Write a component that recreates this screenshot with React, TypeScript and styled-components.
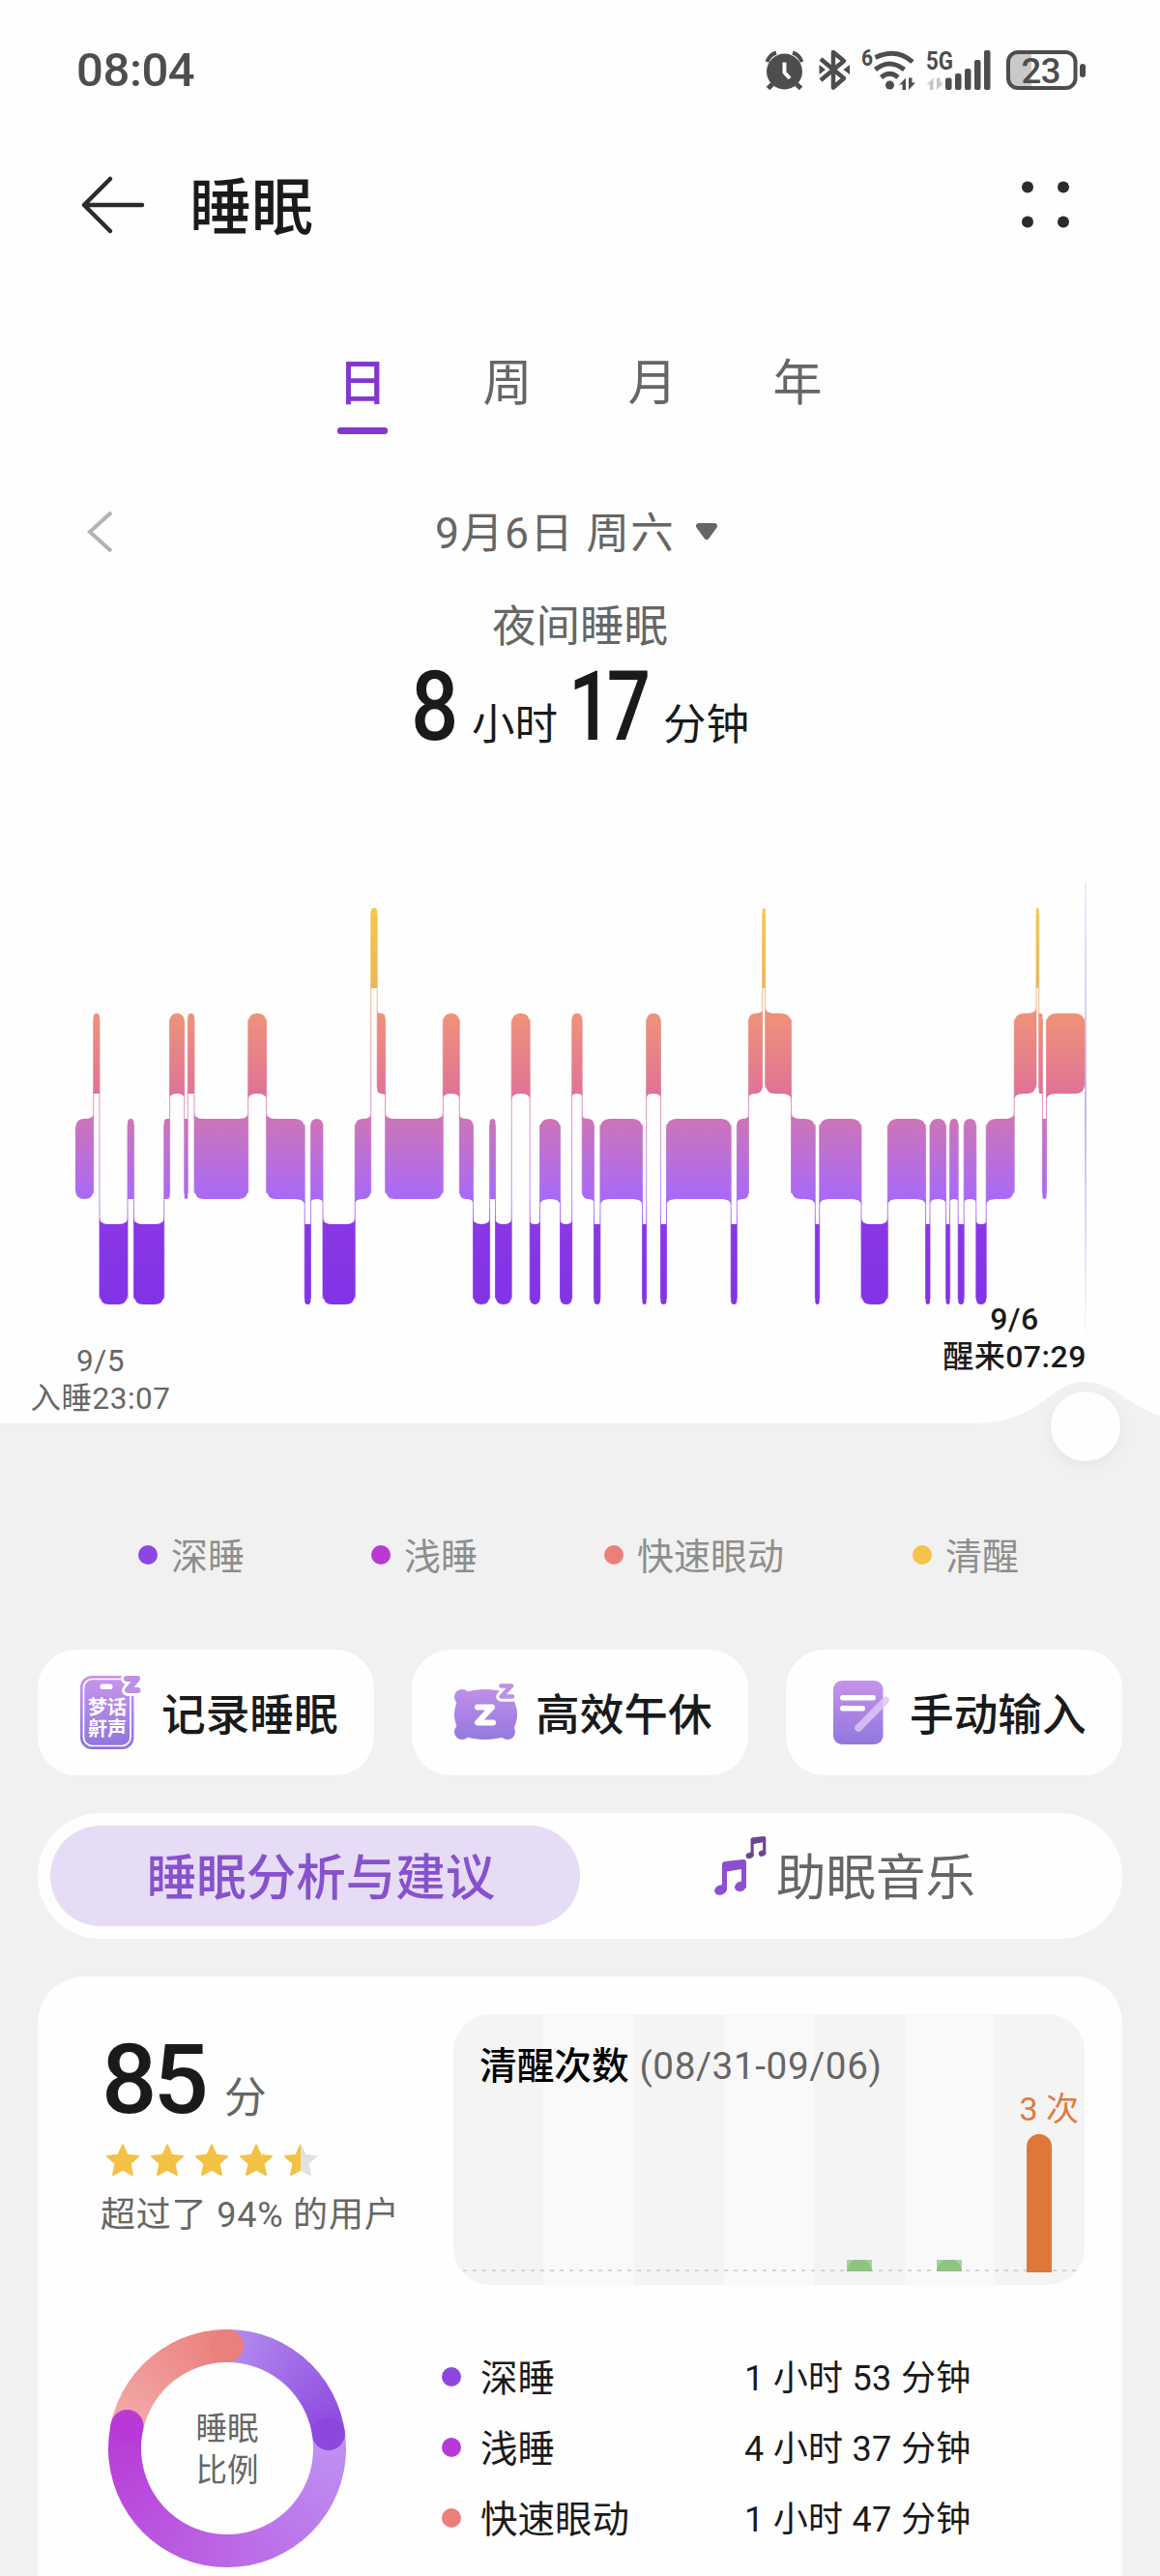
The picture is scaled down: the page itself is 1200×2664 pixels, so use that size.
import { Fragment } from 'react'
import styled, { createGlobalStyle } from 'styled-components'

const GlobalStyle = createGlobalStyle`
  * {
    box-sizing: border-box;
  }
  body {
    margin: 0;
    background: #f1f1f1;
    font-family: 'Noto Sans CJK SC', 'Noto Sans', sans-serif;
    color: #1a1a1a;
  }
  svg {
    display: block;
    flex: none;
    overflow: visible;
  }
  svg text {
    font-family: Roboto, 'Noto Sans CJK SC', sans-serif;
  }
`

const Page = styled.main`
  width: 1200px;
  height: 2664px;
  overflow: hidden;
  background: #f1f1f1;
`
const Summary = styled.section`
  height: 900px;
  background: #fefefe;
`
// keeps the Chinese baseline of the parent, only the digits come from Roboto
const Mixed = styled.span<{ $spacing?: number }>`
  font-family: Roboto, 'Noto Sans CJK SC', sans-serif;
  line-height: 1;
  letter-spacing: ${({ $spacing = 0 }) => $spacing}px;
`

const StatusBar = styled.div`
  display: flex;
  justify-content: space-between;
  align-items: center;
  height: 144px;
  padding: 0 77px 0 79px;
`
const Clock = styled.span`
  padding-top: 2px;
  font-family: Roboto, sans-serif;
  font-size: 49px;
  font-weight: 500;
  line-height: 60px;
  letter-spacing: -0.4px;
  color: #4d4d4d;
`
const StatusIcons = styled.div`
  display: flex;
  gap: 9px;
`

const AppBar = styled.header`
  display: flex;
  align-items: center;
  height: 136px;
  padding: 0 93px 0 83px;
`
const Title = styled.h1`
  flex: 1;
  margin: 0 0 6px 47px;
  font-size: 64px;
  font-weight: 500;
  line-height: 80px;
`

const Tabs = styled.nav`
  display: flex;
  justify-content: center;
  margin-top: 62px;
`
const Tab = styled.div<{ $active?: boolean }>`
  display: flex;
  flex-direction: column;
  align-items: center;
  width: 150px;
  font-size: 51px;
  font-weight: ${({ $active }) => ($active ? 500 : 400)};
  line-height: 100px;
  color: ${({ $active }) => ($active ? '#8436d0' : '#666')};

  &::after {
    content: '';
    width: 52px;
    height: 7px;
    border-radius: 3px;
    background: ${({ $active }) => ($active ? '#8436d0' : 'transparent')};
  }
`

const DateRow = styled.div`
  display: grid;
  grid-template-columns: 1fr auto 1fr;
  align-items: center;
  height: 100px;
  margin-top: 51px;
  padding: 0 97px 0 90px;
`
const DateLabel = styled.div`
  display: flex;
  align-items: center;
  gap: 21px;
  font-size: 44.5px;
  line-height: 60px;
  color: #666;
`
const DateText = styled.span`
  padding-bottom: 5px;
`
const Caption = styled.div`
  margin-top: 14px;
  font-size: 45.5px;
  line-height: 60px;
  text-align: center;
  color: #666;
`
const Duration = styled.div`
  display: flex;
  justify-content: center;
  align-items: baseline;
  margin-top: 7px;
  font-size: 44.5px;
  line-height: 100px;
`
const BigNumber = styled.b<{ $width: number; $scale: number }>`
  width: ${({ $width }) => $width}px;
  font-family: Roboto, sans-serif;
  font-size: 101px;
  font-weight: 500;
  letter-spacing: -7px;
  transform: scaleX(${({ $scale }) => $scale});
  transform-origin: left;
`
const Unit = styled.span`
  margin-right: 11px;

  &:last-child {
    margin-right: 0;
  }
`

const ChartArea = styled.section`
  position: relative;
  height: 660px;
  background: #fefefe;
`
const TimeLabel = styled.div<{ $end?: boolean }>`
  position: absolute;
  top: ${({ $end }) => ($end ? 442 : 485)}px;
  left: ${({ $end }) => ($end ? 973 : 30)}px;
  width: ${({ $end }) => ($end ? 153 : 148)}px;
  font-size: ${({ $end }) => ($end ? 32 : 31.5)}px;
  font-weight: ${({ $end }) => ($end ? 500 : 400)};
  line-height: 39px;
  text-align: center;
  white-space: nowrap;
  color: ${({ $end }) => ($end ? '#1a1a1a' : '#666')};
`

const Legend = styled.div`
  display: flex;
  gap: 131px;
  height: 146px;
  padding: 18px 0 0 143px;
`
const LegendItem = styled.div`
  display: flex;
  align-items: center;
  gap: 14px;
  height: 60px;
  font-size: 38px;
  line-height: 56px;
  color: #8e8e8e;

  &:last-child {
    margin-left: 2px;
  }
`
const Dot = styled.i<{ $color: string }>`
  flex: none;
  width: 20px;
  height: 20px;
  border-radius: 50%;
  background: ${({ $color }) => $color};
`
const Nudge = styled.span`
  padding-bottom: 3px;
`

const Actions = styled.div`
  display: grid;
  grid-template-columns: repeat(3, 1fr);
  gap: 39px;
  padding: 0 39px;
`
const Action = styled.div`
  display: flex;
  align-items: center;
  gap: 20px;
  height: 130px;
  padding-left: 44px;
  border-radius: 40px;
  background: #fefefe;
  font-size: 45.7px;
  font-weight: 500;
  line-height: 60px;
  white-space: nowrap;
`

const Switcher = styled.div`
  display: grid;
  grid-template-columns: 1fr 1fr;
  height: 130px;
  margin: 39px 39px 0;
  padding: 13px;
  border-radius: 65px;
  background: #fefefe;
`
const SwitchItem = styled.div<{ $active?: boolean }>`
  display: flex;
  justify-content: center;
  align-items: center;
  gap: 10px;
  padding: ${({ $active }) => ($active ? '0 0 5px 12px' : '0 0 5px 0')};
  border-radius: 52px;
  background: ${({ $active }) => ($active ? '#e6dcf5' : 'transparent')};
  font-size: 51.5px;
  font-weight: ${({ $active }) => ($active ? 500 : 400)};
  line-height: 70px;
  color: ${({ $active }) => ($active ? '#8652cc' : '#666')};
`

const Card = styled.section`
  height: 620px;
  margin: 39px 39px 0;
  padding: 39px 39px 0 66px;
  border-radius: 48px 48px 0 0;
  background: #fefefe;
`
const CardRow = styled.div`
  display: flex;
  justify-content: space-between;
`
const Score = styled.div`
  padding-top: 9px;
`
const ScoreValue = styled.div`
  display: flex;
  align-items: baseline;
  gap: 20px;
  height: 100px;
  padding-top: 9px;
  font-size: 44px;
  line-height: 100px;
  color: #666;

  b {
    font-family: Roboto, sans-serif;
    font-size: 101px;
    font-weight: 500;
    letter-spacing: -4px;
    color: #1a1a1a;
  }
`
const Stars = styled.div`
  display: flex;
  gap: 12px;
  margin: 25px 0 0 5px;
`
const Rank = styled.div`
  margin: 14px 0 0 -1px;
  font-size: 36px;
  line-height: 44px;
  color: #666;
`

const WakePanel = styled.div`
  position: relative;
  width: 653px;
  height: 280px;
  border-radius: 38px;
  overflow: hidden;
  background: repeating-linear-gradient(90deg, #f4f4f4 0 93.3px, #f9f9f9 93.3px 186.6px);
`
const WakeTitle = styled.div`
  padding: 25px 0 0 27px;
  font-size: 38.7px;
  font-weight: 500;
  line-height: 50px;
  color: #000;
`
const WakeRange = styled(Mixed)`
  margin-left: 2px;
  font-weight: 400;
  color: #666;
`
const WakeBars = styled.div`
  position: absolute;
  inset: 72px 0 13px;
  display: grid;
  grid-template-columns: repeat(7, 1fr);
`
const WakeDay = styled.div`
  display: flex;
  flex-direction: column;
  justify-content: flex-end;
  align-items: center;
`
const WakeCount = styled.div`
  margin-right: -20px;
  font-size: 34px;
  line-height: 40px;
  white-space: nowrap;
  color: #de7a3c;
`
const WakeBar = styled.i<{ $many?: boolean }>`
  width: 26px;
  height: ${({ $many }) => ($many ? 143 : 12)}px;
  margin: ${({ $many }) => ($many ? '8px 0 0' : '0 0 1px')};
  border-radius: ${({ $many }) => ($many ? '13px 13px 0 0' : '0')};
  background: ${({ $many }) =>
    $many ? '#df773a' : 'radial-gradient(circle 13px at 50% 100%, #8fc382 12.5px, #a8d19f 13px)'};
`
const Baseline = styled.div`
  position: absolute;
  right: 0;
  bottom: 14px;
  left: 0;
  height: 2px;
  background: repeating-linear-gradient(90deg, #d6d6d6 0 4px, transparent 4px 10px);
`

const Breakdown = styled.div`
  display: flex;
  margin-top: 46px;
  padding-left: 7px;
`
const Ring = styled.div`
  position: relative;
  display: flex;
  justify-content: center;
  align-items: center;
  width: 246px;
  height: 246px;
  border-radius: 50%;
  background:
    radial-gradient(circle, #fefefe 88.5px, transparent 89.5px),
    conic-gradient(
      #b48dee 0deg,
      #8d47df 81.9deg,
      #be93f3 81.9deg,
      #b839d6 282.5deg,
      #f3aaa9 282.5deg,
      #ea7f7c 360deg
    );
`
const RingCaps = styled.svg`
  position: absolute;
  inset: 0;
`
const RingLabel = styled.div`
  padding-bottom: 4px;
  font-size: 32.5px;
  line-height: 43px;
  text-align: center;
  color: #666;
`
const Stages = styled.div`
  margin: 12px 0 0 99px;
`
const Stage = styled.div`
  display: grid;
  grid-template-columns: 40px 273px auto;
  align-items: center;
  height: 73px;
  font-size: 38.5px;
  line-height: 50px;
  white-space: nowrap;
`
const StageTime = styled.span`
  padding-bottom: 3px;
  font-size: 36px;
`

const levelTop = [939, 1048, 1157, 1266]
const levelHeight = 83

// [level, start x]; levels: 0 awake, 1 REM, 2 light, 3 deep
const segments: [number, number][] = [
  [2, 78], [1, 96.7], [3, 103], [2, 132], [3, 138.5], [2, 169.7], [1, 175.6], [2, 190.7],
  [1, 194.3], [2, 201], [1, 256.7], [2, 275.6], [3, 315.2], [2, 321.4], [3, 334], [2, 367.2],
  [0, 383.7], [1, 390.2], [2, 398.6], [1, 458.3], [2, 475.3], [3, 489.5], [2, 506.6],
  [3, 512.5], [1, 529.2], [3, 548.2], [2, 558.5], [3, 579.5], [1, 591.7], [2, 602.2],
  [3, 614.5], [2, 620.9], [3, 664.5], [1, 668.7], [3, 683.4], [2, 689.5], [3, 756.2],
  [2, 762.3], [1, 774.4], [0, 788.7], [1, 791.7], [2, 818.5], [3, 843.3], [2, 847.7],
  [3, 891], [2, 918.3], [3, 957.6], [2, 962], [3, 978.6], [2, 982.6], [3, 991.2], [2, 997.2],
  [3, 1009.8], [2, 1020.2], [1, 1049.2], [0, 1072], [1, 1074.7], [2, 1078.4], [1, 1082.5],
]
const chartEnd = 1122.3

function segmentPath(i: number) {
  const [level, x0] = segments[i]
  const x1 = segments[i + 1]?.[1] ?? chartEnd
  const prev = segments[i - 1]?.[0]
  const next = segments[i + 1]?.[0]
  const top = levelTop[level]
  const bottom = top + levelHeight
  const w = x1 - x0
  const r = Math.min(10, w / 2)
  const flare = w > 8 ? Math.min(6, r * 0.6) : 0

  const up = (n?: number) => n !== undefined && n < level
  const down = (n?: number) => n !== undefined && n > level
  const tl = up(prev) ? -flare : r
  const tr = up(next) ? -flare : r
  const bl = down(prev) ? -flare : r
  const br = down(next) ? -flare : r

  return [
    `M${x0} ${top + tl}`,
    `Q${x0 + 0.5} ${top} ${x0 + r} ${top}`,
    `L${x1 - r} ${top}`,
    `Q${x1 - 0.5} ${top} ${x1} ${top + tr}`,
    `L${x1} ${bottom - br}`,
    `Q${x1 - 0.5} ${bottom} ${x1 - r} ${bottom}`,
    `L${x0 + r} ${bottom}`,
    `Q${x0 + 0.5} ${bottom} ${x0} ${bottom - bl}`,
    'Z',
  ].join(' ')
}

function SleepChart() {
  return (
    <svg width='1200' height='660' viewBox='0 900 1200 660'>
      <defs>
        <linearGradient id='stages' gradientUnits='userSpaceOnUse' x1='0' y1='939' x2='0' y2='1349'>
          <stop offset='0' stopColor='#f5c748' />
          <stop offset='.2' stopColor='#edb559' />
          <stop offset='.266' stopColor='#ef927a' />
          <stop offset='.468' stopColor='#df7395' />
          <stop offset='.532' stopColor='#cd75b8' />
          <stop offset='.734' stopColor='#a869f8' />
          <stop offset='.797' stopColor='#8a37e6' />
          <stop offset='1' stopColor='#8033e6' />
        </linearGradient>
        <linearGradient id='cursor' x1='0' y1='0' x2='0' y2='1'>
          <stop offset='0' stopColor='#f0ecfb' />
          <stop offset='.5' stopColor='#c9b3ea' />
          <stop offset='1' stopColor='#fefefe' />
        </linearGradient>
        <filter id='knobShadow' x='-50%' y='-50%' width='200%' height='200%'>
          <feDropShadow dx='0' dy='4' stdDeviation='7' floodColor='#000' floodOpacity='.05' />
        </filter>
      </defs>
      <rect x='1122' y='912' width='2' height='480' fill='url(#cursor)' />
      {segments.map(([level, x], i) => {
        const prev = segments[i - 1]?.[0]
        const y = prev === undefined ? 0 : levelTop[Math.min(prev, level)] + 6
        const end = prev === undefined ? 0 : levelTop[Math.max(prev, level)] + levelHeight - 6
        return (
          <Fragment key={x}>
            <path d={segmentPath(i)} fill='url(#stages)' />
            {prev !== undefined && (
              <rect x={x - 0.5} y={y} width='1' height={end - y} fill='url(#stages)' opacity='.75' />
            )}
          </Fragment>
        )
      })}
      <path
        d='M0 1472H1005C1082 1472 1082 1429 1123 1429C1151 1429 1168 1454 1200 1464.5V1560H0Z'
        fill='#f1f1f1'
      />
      <circle cx='1123' cy='1475' r='36' fill='#fefefe' filter='url(#knobShadow)' />
    </svg>
  )
}

function AlarmIcon() {
  return (
    <svg width='47' height='44' viewBox='0 0 47 44' fill='none' stroke='#4d4d4d'>
      <circle cx='20.5' cy='24' r='18.5' fill='#4d4d4d' stroke='none' />
      <path d='M2.5 14Q5 6.500 12 4.500M38.500 14Q36 6.500 29 4.500' strokeWidth='4' />
      <path d='M8 37l-4.500 4.500M33 37l4.500 4.500' strokeWidth='5' />
      <path d='M20.500 14.500V25l5.500 6' stroke='#fefefe' strokeWidth='4' />
    </svg>
  )
}

function BluetoothIcon() {
  return (
    <svg width='35' height='44' viewBox='0 0 35 44' fill='none' stroke='#4d4d4d' strokeWidth='4.500'>
      <path d='M2 11l24 20-11 9.500V4l11 9L2 33' strokeLinejoin='round' />
      <path d='M.500 17l6.500 5-6.500 5zM32 17l-6.500 5 6.500 5z' fill='#4d4d4d' stroke='none' />
    </svg>
  )
}

function WifiIcon() {
  return (
    <svg width='57' height='44' viewBox='0 0 57 44' fill='none' stroke='#4d4d4d' strokeWidth='5'>
      <text x='0' y='18' fontSize='23' fontWeight='700' fill='#4d4d4d' stroke='none' textLength='12' lengthAdjust='spacingAndGlyphs'>
        6
      </text>
      <path d='M14.500 9.500Q36 -1 53 14M14.500 22Q29 10 44.500 22M20.500 30Q29.500 22.500 38 30' />
      <circle cx='29.500' cy='38' r='4.500' fill='#4d4d4d' stroke='none' />
      <path d='M39 38l7-7.500V43h-3.500v-6zM56 35.500L49 43V30.500h3.500v5z' fill='#4d4d4d' stroke='none' />
    </svg>
  )
}

const signalBars = [30.5, 26, 21, 12, 2]

function SignalIcon() {
  return (
    <svg width='75' height='44' viewBox='0 0 75 44' fill='#4d4d4d'>
      <text x='1' y='21.500' fontSize='26' fontWeight='700' textLength='28' lengthAdjust='spacingAndGlyphs'>
        5G
      </text>
      <path d='M1.500 38l7-7.500V43H5v-6zM19 35.500L12 43V30.500h3.500v5z' fill='#c6c6c6' />
      {signalBars.map((y, i) => (
        <rect key={y} x={21 + i * 10} y={y} width='6.500' height={43 - y} rx='2' />
      ))}
    </svg>
  )
}

function BatteryIcon() {
  return (
    <svg width='82' height='44' viewBox='0 0 82 44'>
      <path d='M12 4h14v37H12Q3 41 3 32V13Q3 4 12 4z' fill='#c9c9c9' />
      <rect x='2' y='4' width='69.500' height='37' rx='10' fill='none' stroke='#4d4d4d' strokeWidth='4' />
      <rect x='76' y='16' width='6' height='14' rx='3' fill='#4d4d4d' />
      <text x='15.500' y='35.500' fontSize='36.500' fontWeight='500' fill='#4d4d4d' textLength='41'>
        23
      </text>
    </svg>
  )
}

function IconGradient({ id }: { id: string }) {
  return (
    <linearGradient id={id} gradientUnits='userSpaceOnUse' x1='0' y1='4' x2='0' y2='76'>
      <stop offset='0' stopColor='#c795ec' />
      <stop offset='1' stopColor='#8f75dc' />
    </linearGradient>
  )
}

function RecordIcon() {
  return (
    <svg width='64' height='80' viewBox='0 0 64 80'>
      <defs>
        <IconGradient id='record' />
      </defs>
      <rect x='0' y='2' width='55.500' height='76' rx='12' fill='url(#record)' />
      <rect x='3.500' y='5.500' width='48.500' height='69' rx='9' fill='none' stroke='#fff' strokeWidth='1.700' />
      <rect x='20.500' y='10.500' width='13' height='5.500' rx='2.500' fill='#fff' />
      <text x='8' y='42' fontSize='20' fontWeight='700' fill='#fff' textLength='40'>梦话</text>
      <text x='8' y='64' fontSize='20' fontWeight='700' fill='#fff' textLength='40'>鼾声</text>
      <path d='M48 5h11L49 17h10.500' fill='none' stroke='#fefefe' strokeWidth='12' strokeLinejoin='round' strokeLinecap='round' />
      <path d='M48 5h11L49 17h10.500' fill='none' stroke='#bd90e9' strokeWidth='6' strokeLinejoin='round' strokeLinecap='round' />
    </svg>
  )
}

function NapIcon() {
  return (
    <svg width='64' height='80' viewBox='0 0 64 80'>
      <defs>
        <IconGradient id='nap' />
      </defs>
      <g fill='url(#nap)'>
        <path d='M8 20Q32 12 57 20Q73 42 57 64Q32 72 8 64Q-8 42 8 20Z' />
        <circle cx='8' cy='24' r='8' />
        <circle cx='8' cy='60' r='8' />
        <circle cx='55' cy='60' r='8' />
      </g>
      <path d='M24 34.500h15L24 50.500h16' fill='none' stroke='#fff' strokeWidth='6' strokeLinejoin='round' strokeLinecap='round' />
      <path d='M48.500 12.500h10.500L48.500 23.500h11.500' fill='none' stroke='#fefefe' strokeWidth='10.500' strokeLinejoin='round' strokeLinecap='round' />
      <path d='M48.500 12.500h10.500L48.500 23.500h11.500' fill='none' stroke='#bd90e9' strokeWidth='4.500' strokeLinejoin='round' strokeLinecap='round' />
    </svg>
  )
}

function NoteIcon() {
  return (
    <svg width='64' height='80' viewBox='0 0 64 80'>
      <defs>
        <IconGradient id='note' />
      </defs>
      <rect x='5' y='7' width='51.500' height='66' rx='9' fill='url(#note)' />
      <rect x='12' y='22' width='37' height='5.500' rx='2.700' fill='#fff' />
      <rect x='12' y='33' width='26' height='5.500' rx='2.700' fill='#fff' />
      <path d='M31 56L59 27.500' stroke='#dcc6f8' strokeWidth='7.500' strokeLinecap='round' opacity='.85' />
    </svg>
  )
}

function MusicNote({ color }: { color: string }) {
  return (
    <g fill={color}>
      <path d='M8 5Q8 2.500 11 2L29 0Q33 -.500 33 3V29H28V10L13 12.500V32H8Z' />
      <ellipse cx='6.500' cy='31.500' rx='6.500' ry='5' transform='rotate(-20 6.500 31.500)' />
      <ellipse cx='27' cy='28' rx='6' ry='5' transform='rotate(-20 27 28)' />
    </g>
  )
}

function MusicIcon() {
  return (
    <svg width='54' height='64' viewBox='0 0 54 64'>
      <g transform='translate(0 17)'>
        <MusicNote color='#8b4fd0' />
      </g>
      <g transform='translate(32.500 -7) scale(.63)'>
        <MusicNote color='#6b4793' />
      </g>
    </svg>
  )
}

const starPath = 'M17 1.500L21.600 11.800L33 13L24.500 20.500L27 32L17 26.500L7 32L9.500 20.500L1 13L12.400 11.800Z'

function Star({ half }: { half?: boolean }) {
  return (
    <svg width='34' height='34' viewBox='0 0 34 34' strokeLinejoin='round' strokeWidth='2'>
      <defs>
        <linearGradient id='halfStar'>
          <stop offset='.5' stopColor='#f3c144' />
          <stop offset='.5' stopColor='#e1e1e1' />
        </linearGradient>
      </defs>
      <path d={starPath} fill={half ? 'url(#halfStar)' : '#f3c144'} stroke={half ? 'url(#halfStar)' : '#f3c144'} />
    </svg>
  )
}

const legend = [
  { name: '深睡', color: '#8d47de' },
  { name: '浅睡', color: '#b839d6' },
  { name: '快速眼动', color: '#ec7f7c' },
  { name: '清醒', color: '#f4c34a' },
]
const stageTimes = ['1 小时 53 分钟', '4 小时 37 分钟', '1 小时 47 分钟']
const wakeCounts = [0, 0, 0, 0, 1, 1, 3]

export default function App() {
  return (
    <Page>
      <GlobalStyle />
      <Summary>
        <StatusBar>
          <Clock>08:04</Clock>
          <StatusIcons>
            <AlarmIcon />
            <BluetoothIcon />
            <WifiIcon />
            <SignalIcon />
            <BatteryIcon />
          </StatusIcons>
        </StatusBar>

        <AppBar>
          <svg width='66' height='60' viewBox='0 0 66 60' fill='none' stroke='#2b2b2b' strokeWidth='4.500' strokeLinecap='round' strokeLinejoin='round'>
            <path d='M64 30H4M31 3L4 30l27 27' />
          </svg>
          <Title>睡眠</Title>
          <svg width='50' height='50' viewBox='0 0 50 50' fill='#2b2b2b'>
            <circle cx='6' cy='6.500' r='6' />
            <circle cx='43' cy='6.500' r='6' />
            <circle cx='6' cy='42.500' r='6' />
            <circle cx='43' cy='42.500' r='6' />
          </svg>
        </AppBar>

        <Tabs>
          <Tab $active>日</Tab>
          <Tab>周</Tab>
          <Tab>月</Tab>
          <Tab>年</Tab>
        </Tabs>

        <DateRow>
          <svg width='28' height='44' viewBox='0 0 28 44' fill='none' stroke='#b3b3b3' strokeWidth='4'>
            <path d='M25 2L3 22l22 20' />
          </svg>
          <DateLabel>
            <DateText>
              <Mixed $spacing={1.3}>9月6日 周六</Mixed>
            </DateText>
            <svg width='24' height='18' viewBox='0 0 24 18'>
              <path d='M4 3h16l-8 11z' fill='#666' stroke='#666' strokeWidth='6' strokeLinejoin='round' />
            </svg>
          </DateLabel>
        </DateRow>
        <Caption>夜间睡眠</Caption>
        <Duration>
          <BigNumber $width={63} $scale={0.86}>8</BigNumber>
          <Unit>小时</Unit>
          <BigNumber $width={98} $scale={0.79}>17</BigNumber>
          <Unit>分钟</Unit>
        </Duration>
      </Summary>

      <ChartArea>
        <SleepChart />
        <TimeLabel>
          <Mixed $spacing={0.5}>9/5</Mixed>
          <br />
          <Mixed $spacing={0.5}>入睡23:07</Mixed>
        </TimeLabel>
        <TimeLabel $end>
          <Mixed $spacing={0.5}>9/6</Mixed>
          <br />
          <Mixed $spacing={0.5}>醒来07:29</Mixed>
        </TimeLabel>
      </ChartArea>

      <Legend>
        {legend.map(({ name, color }) => (
          <LegendItem key={name}>
            <Dot $color={color} />
            <Nudge>{name}</Nudge>
          </LegendItem>
        ))}
      </Legend>

      <Actions>
        <Action>
          <RecordIcon />
          <Nudge>记录睡眠</Nudge>
        </Action>
        <Action>
          <NapIcon />
          <Nudge>高效午休</Nudge>
        </Action>
        <Action>
          <NoteIcon />
          <Nudge>手动输入</Nudge>
        </Action>
      </Actions>

      <Switcher>
        <SwitchItem $active>睡眠分析与建议</SwitchItem>
        <SwitchItem>
          <MusicIcon />
          助眠音乐
        </SwitchItem>
      </Switcher>

      <Card>
        <CardRow>
          <Score>
            <ScoreValue>
              <b>85</b>分
            </ScoreValue>
            <Stars>
              <Star />
              <Star />
              <Star />
              <Star />
              <Star half />
            </Stars>
            <Rank>
              <Mixed $spacing={0.8}>超过了 94% 的用户</Mixed>
            </Rank>
          </Score>
          <WakePanel>
            <WakeTitle>
              清醒次数 <WakeRange $spacing={0.6}>(08/31-09/06)</WakeRange>
            </WakeTitle>
            <Baseline />
            <WakeBars>
              {wakeCounts.map((count, i) => (
                <WakeDay key={i}>
                  {count > 1 && (
                    <WakeCount>
                      <Mixed>{count} 次</Mixed>
                    </WakeCount>
                  )}
                  {count > 0 && <WakeBar $many={count > 1} />}
                </WakeDay>
              ))}
            </WakeBars>
          </WakePanel>
        </CardRow>

        <Breakdown>
          <Ring>
            <RingCaps width='246' height='246' viewBox='-123 -123 246 246'>
              <circle cx='0' cy='-106' r='17' fill='#ea7f7c' />
              <circle cx='104.900' cy='-14.900' r='17' fill='#8d47df' />
              <circle cx='-103.500' cy='-23' r='17' fill='#b839d6' />
            </RingCaps>
            <RingLabel>
              睡眠
              <br />
              比例
            </RingLabel>
          </Ring>
          <Stages>
            {stageTimes.map((time, i) => (
              <Stage key={time}>
                <Dot $color={legend[i].color} />
                <Nudge>{legend[i].name}</Nudge>
                <StageTime>
                  <Mixed $spacing={0.3}>{time}</Mixed>
                </StageTime>
              </Stage>
            ))}
          </Stages>
        </Breakdown>
      </Card>
    </Page>
  )
}
